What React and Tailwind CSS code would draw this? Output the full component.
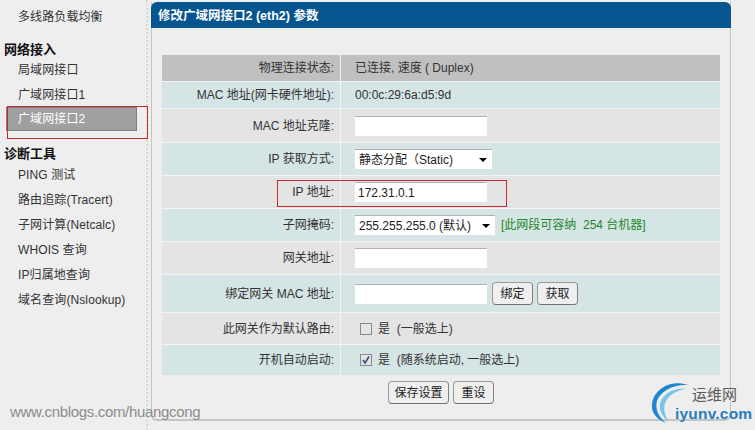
function Item({ children, active }) {
  return (
    <div className={`flex items-center ml-[6px] w-[131px] text-[12px] tracking-[0.1px] ${active ? "h-[24px] pl-[11px] bg-[#a0a0a0] text-white border border-[#808080]" : "h-[25px] pl-[12px] text-[#333333]"}`}>
      {children}
    </div>
  );
}
function Heading({ children, className }) {
  return <div className={`pl-[4px] text-[13px] font-bold text-[#111111] leading-[16px] ${className}`}>{children}</div>;
}
function Row({ label, h, bg, last, children }) {
  return (
    <div className={`flex ${last ? "" : "border-b border-[#f4f4f4]"} ${h} ${bg}`}>
      <div className="w-[179px] shrink-0 flex items-center justify-end text-[12px] text-[#333333] border-r border-[#f4f4f4] pr-[6px]">{label}</div>
      <div className="flex-1 flex items-center pl-[14px] text-[12px] text-[#333333]">{children}</div>
    </div>
  );
}
function Input({ value }) {
  return <div className="w-[132px] h-[20px] bg-white border-t border-[#b0b0b0] rounded-[1px] flex items-center pl-[3px] text-[12px] text-[#222222]">{value}</div>;
}
function Select({ label, w }) {
  return (
    <div className={`${w} h-[20px] bg-white border-t border-[#b0b0b0] flex items-center justify-between pl-[4px] pr-[5px] text-[12px] text-[#222222]`}>
      <span>{label}</span>
      <span className="w-0 h-0 border-l-[4px] border-r-[4px] border-t-[4px] border-l-transparent border-r-transparent border-t-black" />
    </div>
  );
}
function Btn({ children, className }) {
  return <div className={`h-[23px] flex items-center justify-center bg-[#efefef] border border-[#9a9a9a] border-b-[#707070] border-r-[#808080] rounded-[4px] text-[12px] text-[#222222] ${className}`}>{children}</div>;
}
function Check({ checked }) {
  return (
    <span className="w-[12px] h-[12px] border border-[#8a8a8a] bg-[#e4e4e4] flex items-center justify-center mr-[6px] ml-[5px]">
      {checked && (
        <svg width="10" height="10" viewBox="0 0 10 10"><path d="M2 5 L4 8 L8 1.5" stroke="#3a4f8a" strokeWidth="1.6" fill="none" /></svg>
      )}
    </span>
  );
}
const teal = "bg-[#d5e4e5]";
const light = "bg-[#e4e4e4]";
export default function App() {
  return (
    <div className="relative w-[755px] h-[430px] overflow-hidden bg-[#eeeeee] flex font-['Liberation_Sans','Noto_Sans_CJK_SC',sans-serif]">
      <aside className="w-[148px] shrink-0 h-full border-r-2 border-dotted border-[#d8d8d8] pt-[4px]">
        <Item>多线路负载均衡</Item>
        <Heading className="mt-[13px]">网络接入</Heading>
        <div className="-mt-[1px]"><Item>局域网接口</Item></div>
        <Item>广域网接口1</Item>
        <Item active>广域网接口2</Item>
        <Heading className="mt-[15px]">诊断工具</Heading>
        <div>
          <Item>PING 测试</Item>
          <Item>路由追踪(Tracert)</Item>
          <Item>子网计算(Netcalc)</Item>
          <Item>WHOIS 查询</Item>
          <Item>IP归属地查询</Item>
          <Item>域名查询(Nslookup)</Item>
        </div>
      </aside>
      <main className="ml-[3px] mt-[2px] w-[580px] h-[419px] border-l border-r border-b-2 border-[#c4c4c4] rounded-b-[6px]">
        <div className="h-[26px] -mx-[1px] bg-[#07558f] rounded-t-[6px] flex items-center pl-[7px] pt-[3px] text-[12.5px] font-bold text-white">修改广域网接口2 (eth2) 参数</div>
        <div className="mt-[27px] mx-[10px] w-[558px]">
          <Row label="物理连接状态:" h="h-[27px]" bg="bg-[#c0c0c0]">已连接, 速度 ( Duplex)</Row>
          <Row label="MAC 地址(网卡硬件地址):" h="h-[27px]" bg={teal}>00:0c:29:6a:d5:9d</Row>
          <Row label="MAC 地址克隆:" h="h-[34px]" bg={light}><Input /></Row>
          <Row label="IP 获取方式:" h="h-[33px]" bg={teal}><Select label="静态分配（Static)" w="w-[137px]" /></Row>
          <Row label="IP 地址:" h="h-[33px]" bg={light}><Input value="172.31.0.1" /></Row>
          <Row label="子网掩码:" h="h-[33px]" bg={teal}>
            <Select label="255.255.255.0 (默认)" w="w-[140px]" />
            <span className="ml-[6px] text-[#1e8a2a] whitespace-nowrap">[此网段可容纳&nbsp;&nbsp;254 台机器]</span>
          </Row>
          <Row label="网关地址:" h="h-[33px]" bg={light}><Input /></Row>
          <Row label="绑定网关 MAC 地址:" h="h-[38px]" bg={teal}>
            <Input />
            <Btn className="w-[41px] ml-[5px]">绑定</Btn>
            <Btn className="w-[41px] ml-[4px]">获取</Btn>
          </Row>
          <Row label="此网关作为默认路由:" h="h-[32px]" bg={light}><Check />是&nbsp;&nbsp;(一般选上)</Row>
          <Row label="开机自动启动:" h="h-[30px]" bg={teal} last><Check checked />是&nbsp;&nbsp;(随系统启动, 一般选上)</Row>
          <div className="flex justify-start gap-[4px] mt-[6px] ml-[226px]">
            <Btn className="w-[61px]">保存设置</Btn>
            <Btn className="w-[41px]">重设</Btn>
          </div>
        </div>
      </main>

      <div className="absolute left-[7px] top-[106px] w-[141px] h-[33px] border border-[#c8282c]" />
      <div className="absolute left-[277px] top-[180px] w-[230px] h-[27px] border border-[#c8282c]" />
      <div className="absolute left-[10px] top-[402px] text-[15px] text-[#8c8c8c] leading-[20px] tracking-[-0.33px] whitespace-nowrap">www.cnblogs.com/huangcong</div>
      <svg className="absolute left-[650px] top-[380px]" width="42" height="46" viewBox="0 0 42 46">
        <path d="M38 5 C22 -1 4 8 2 24 C1 32 6 39 16 43 C8 36 5 29 7 21 C10 11 24 4 38 5Z" fill="#1f86cf" />
        <path d="M36 9 C24 7 12 14 10 24 C9 31 12 36 18 41 C14 33 13 27 16 21 C20 14 28 10 36 9Z" fill="#7cc3ea" />
      </svg>
      <div className="absolute left-[692px] top-[386px] text-[15px] text-[#5a5a5a] leading-[18px] whitespace-nowrap">运维网</div>
      <div className="absolute left-[675px] top-[405px] text-[15.5px] font-bold text-[#2a7cc0] leading-[18px] tracking-[0.2px] whitespace-nowrap">iyunv.com</div>
    </div>
  );
}
